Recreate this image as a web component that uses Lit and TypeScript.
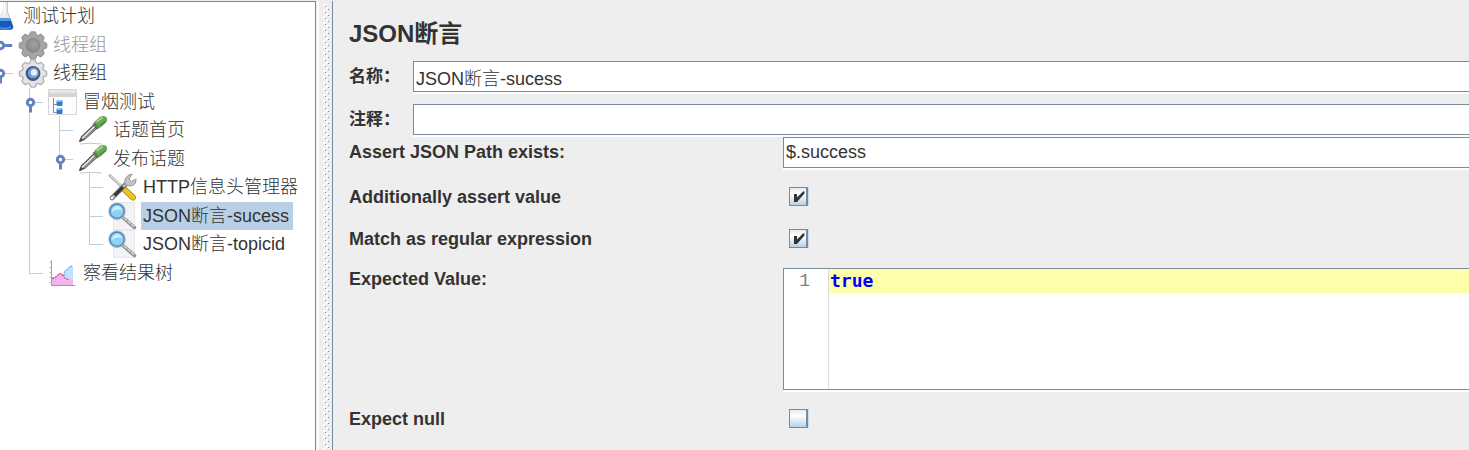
import { LitElement, html, svg, css } from "lit";
import { customElement, property, state } from "lit/decorators.js";

type Guide = "none" | "line" | "tee" | "end" | "open" | "openEnd" | "closed";
interface Node {
  id: string;
  label: string;
  icon: string;
  guides: Guide[];
  disabled?: boolean;
}

const NODES: Node[] = [
  { id: "plan", label: "测试计划", icon: "flask", guides: [] },
  { id: "tg1", label: "线程组", icon: "gearOff", guides: ["closed"], disabled: true },
  { id: "tg2", label: "线程组", icon: "gear", guides: ["open"] },
  { id: "smoke", label: "冒烟测试", icon: "controller", guides: ["none", "open"] },
  { id: "home", label: "话题首页", icon: "pipette", guides: ["none", "line", "tee"] },
  { id: "post", label: "发布话题", icon: "pipette", guides: ["none", "line", "openEnd"] },
  { id: "header", label: "HTTP信息头管理器", icon: "tools", guides: ["none", "line", "none", "tee"] },
  { id: "a1", label: "JSON断言-sucess", icon: "lens", guides: ["none", "line", "none", "tee"] },
  { id: "a2", label: "JSON断言-topicid", icon: "lens", guides: ["none", "line", "none", "end"] },
  { id: "results", label: "察看结果树", icon: "chart", guides: ["none", "end"] },
];

const gear = (body: string, edge: string, ring: string, core: string, hole: string) => svg`
  <g fill=${body} stroke=${edge} stroke-width="1.400">
    <circle cx="15" cy="14.500" r="10.600"/>
    ${[0, 45, 90, 135, 180, 225, 270, 315].map(
      (a) => svg`<path transform="rotate(${a} 15 14.500)" d="M11 5.500 L12.400 1.800 Q12.700 .9 13.600 .9 H16.400 Q17.300 .9 17.600 1.800 L19 5.500"/>`,
    )}
  </g>
  <circle cx="15" cy="14.500" r="10.200" fill=${body}/>
  <circle cx="15" cy="14.500" r="7.400" fill=${ring}/>
  <circle cx="15.300" cy="14" r="5.400" fill=${core}/>
  <circle cx="16" cy="13.500" r="3.200" fill=${hole}/>`;

const ICONS: Record<string, unknown> = {
  flask: svg`
    <path d="M15 -1 V7 L7 24 Q6 28 9 28 H22 Q26 28 25 24 L19.500 10 V-1 Z" fill="#e6e9ed"/>
    <path d="M19.500 0 V10 L25 24" fill="none" stroke="#c3c7cc"/>
    <path d="M10 17 H22.500 L25.300 25 Q25 27.800 22 27.800 H8 Q5 27.500 6 25 Z" fill="#1559b5"/>
    <path d="M11 16 H22 L22.800 19 H10 Z" fill="#5b98e0"/>
    <path d="M12 25.500 Q17 27.500 23 25" stroke="#4a90e2" fill="none" stroke-width="1.500"/>
    <path d="M16.500 0 V10 L15 15" stroke="#fff" fill="none" stroke-width="1.500"/>`,
  gearOff: gear("#a5a5a5", "#999", "#8a8a8a", "#949494", "#9c9c9c"),
  gear: gear("#e4e4e4", "#b4b4b4", "#3a5a94", "#7d9dcb", "#e6eef8"),
  controller: svg`
    <rect x=".5" y="1.500" width="28" height="25" fill="#fdfdfd" stroke="#d5d5d5"/>
    <rect x="1" y="2" width="27" height="7" fill="#d4d4d4"/>
    <rect x="1" y="2" width="27" height="3" fill="#e6e6e6"/>
    <path d="M5.500 10 V24.500 H9 M5.500 16.500 H9" fill="none" stroke="#8c8c8c"/>
    <rect x="8.500" y="12.500" width="6" height="5.500" rx="1" fill="#2c7fd6"/>
    <rect x="8.500" y="20.500" width="6" height="5.500" rx="1" fill="#2c7fd6"/>
    <path d="M9 13.500 H13 M9 21.500 H13" stroke="#8ec1f2"/>`,
  pipette: svg`
    <path d="M2 28 Q12 26.500 24 28" stroke="#c8c8c8" fill="none"/>
    <path d="M.8 25.800 L3 20.500 L15.500 8.500 L19.500 12.500 L7.500 23.300 L2.500 26 Z" fill="#4b4b4b"/>
    <path d="M4 22.500 L16.500 10.500" stroke="#e2e2e2" stroke-width="1.800"/>
    <path d="M5.800 23 L18 12.300" stroke="#999" stroke-width="1.200"/>
    <path d="M14.500 8 L17 6 L22 11 L19.500 13.500 Z" fill="#57804b"/>
    <path d="M16 6 L22 .8 Q25.500 -1 28 .8 Q30 3 28.500 6 L22 12 Z" fill="#69a856"/>
    <path d="M18.500 5.800 L24.500 1.500" stroke="#a5d493" stroke-width="2"/>
    <path d="M22 10 L27.500 5.500" stroke="#4d853d" stroke-width="1.500"/>`,
  tools: svg`
    <path d="M2 2.500 L14 14" stroke="#b5b5b5" stroke-width="3" stroke-linecap="round"/>
    <path d="M2.500 2.500 L13 12.500" stroke="#ededed" stroke-width="1"/>
    <path d="M16.500 16.500 L25 24.500" stroke="#b88d1c" stroke-width="6" stroke-linecap="round"/>
    <path d="M16.500 16.500 L25 24.500" stroke="#f3c51c" stroke-width="4.200" stroke-linecap="round"/>
    <path d="M4 25 L19 10" stroke="#777" stroke-width="4.600" stroke-linecap="round"/>
    <path d="M4 25 L19 10" stroke="#c0c0c0" stroke-width="2.400" stroke-linecap="round"/>
    <path d="M6.500 22.500 L15 14" stroke="#333" stroke-width="3"/>
    <path d="M17 12 Q15.500 5 21 2 L24 1 L21 6 L23.500 8.500 L28 6 Q28.500 12.500 22 13 Z" fill="#c4c4c4" stroke="#969696"/>
    <circle cx="4" cy="25" r="1.200" fill="#fff"/>`,
  lens: svg`
    <path d="M5.500 .5 H26.500 V27.500 H5.500 Z" fill="#f3f3f5" stroke="#e8e8ea"/>
    <path d="M15.500 16 L26.500 25.500" stroke="#8e8e8e" stroke-width="3.600" stroke-linecap="round"/>
    <path d="M16 16 L26.500 25" stroke="#dedede" stroke-width="1.400" stroke-linecap="round" stroke-dasharray="3 2"/>
    <circle cx="9" cy="9.200" r="8" fill="#7fc4ee" stroke="#9fb6cc" stroke-width="1.400"/>
    <circle cx="9" cy="9.200" r="7" fill="#8fd0f3" stroke="#4a86bd" stroke-width="1.200"/>
    <path d="M4 8.500 Q5.500 4 9.500 4 Q13.500 4.500 14 8.500 Q9 6 4 10 Z" fill="#cdeefc"/>`,
  chart: svg`
    <path d="M4 26 V18.500 Q8 18.500 10 15.500 Q12.500 12.500 15 16 Q18 20 21 17 L25 16 V26 Z" fill="#f3b4ee"/>
    <path d="M25 7 V20 Q19 22 16.500 17.500 Q15 12 19.500 10.500 Q21 7 25 7 Z" fill="#c3e0fb"/>
    <path d="M16.500 17 Q15 12 19.500 10.500 Q21 7 25 7" fill="none" stroke="#72aae2" stroke-width="1.300" stroke-dasharray="2 1"/>
    <path d="M4 19.500 Q8 19 10 15.800 Q12.500 13 15 16.500 Q18 21 21 20" fill="none" stroke="#cc5aa0" stroke-width="1.500" stroke-dasharray="2 1"/>
    <path d="M3.500 1 V26.500 H27" fill="none" stroke="#9b9b9b"/>
    <path d="M1.500 3.500 H4 M1.500 8.500 H4 M1.500 13.500 H4 M1.500 18.500 H4 M1.500 23.500 H4" stroke="#b4b4b4"/>`,
};

const guide = (g: Guide) => {
  const parts: unknown[] = [];
  if (g === "line" || g === "tee" || g === "open") parts.push(svg`<path class="rule" d="M11.500 0 V29"/>`);
  if (g === "end" || g === "openEnd") parts.push(svg`<path class="rule" d="M11.500 0 V14.500"/>`);
  if (g !== "line" && g !== "none") parts.push(svg`<path class="rule" d="M11.500 14.500 H25"/>`);
  if (g === "open" || g === "openEnd")
    parts.push(svg`<path d="M12.500 17 V24.500" class="stem"/><circle class="knob" cx="12.500" cy="14.500" r="3.200"/>`);
  if (g === "closed")
    parts.push(svg`<path d="M15 14.500 H24" class="stem"/><circle class="knob" cx="12.500" cy="14.500" r="3.200"/>`);
  return html`<svg class="guide" viewBox="0 0 30 28" aria-hidden="true">${parts}</svg>`;
};

@customElement("plan-tree")
class PlanTree extends LitElement {
  @property() selected = "a1";

  static styles = css`
    :host {
      display: block;
      overflow: hidden;
      background: #fff;
      border-top: 1px solid #7a8a99;
      border-right: 1px solid #7a8a99;
      box-shadow: 1px 0 #eee, 3px 0 #fff;
    }
    .tree {
      display: grid;
      grid-auto-rows: 1fr;
      height: 285px;
      margin: 0 0 0 -12px;
      padding: 0;
      list-style: none;
    }
    .row {
      display: flex;
      align-items: center;
      min-height: 0;
      white-space: nowrap;
    }
    .guide,
    .icon {
      width: 30px;
      height: 28px;
      flex: none;
      overflow: visible;
    }
    .rule {
      fill: none;
      stroke: #b8cfe5;
      shape-rendering: crispEdges;
    }
    .stem {
      stroke: #6382bf;
      stroke-width: 3;
    }
    .knob {
      fill: #fff;
      stroke: #6382bf;
      stroke-width: 3;
    }
    .label {
      margin: 0 0 0 3px;
      padding: 0 4px 0 2px;
      border: 0;
      background: none;
      color: #333;
      font: 300 18px/28px "Liberation Sans", "Noto Sans CJK SC", sans-serif;
      text-align: left;
    }
    .off {
      color: #999;
    }
    .on {
      background: #b8cfe5;
    }
  `;

  render() {
    return html`<ul class="tree">
      ${NODES.map(
        (n) => html`<li class="row">
          ${n.guides.map(guide)}
          <svg class="icon" viewBox="0 0 30 28" aria-hidden="true">${ICONS[n.icon]}</svg>
          <button
            class="label ${n.disabled ? "off" : ""} ${n.id === this.selected ? "on" : ""}"
            @click=${() => (this.selected = n.id)}
          >${n.label}</button>
        </li>`,
      )}
    </ul>`;
  }
}

@customElement("assertion-form")
class AssertionForm extends LitElement {
  @state() private lines = 1;

  static styles = css`
    :host {
      display: block;
      min-width: 0;
      padding: 16px 0 0 16px;
      border-left: 1px solid #7a8a99;
      overflow: hidden;
      color: #333;
      font: bold 18px/22px "Liberation Sans", "Noto Sans CJK SC", sans-serif;
    }
    .title {
      margin: 0 0 10px;
      font-size: 24px;
      line-height: 34px;
    }
    .row {
      display: grid;
      grid-template-columns: 64px 1fr;
      align-items: center;
      margin-bottom: 12px;
    }
    .options {
      display: grid;
      grid-template-columns: 434px 1fr;
      row-gap: 8px;
      margin-top: -10px;
    }
    .pair {
      display: grid;
      grid-template-columns: 434px 1fr;
      grid-column: 1 / -1;
      line-height: 42px;
    }
    .group {
      grid-column: 1 / -1;
    }
    .name {
      line-height: 31px;
    }
    .cjk {
      font-size: 17px;
    }
    .field {
      box-sizing: border-box;
      width: 100%;
      height: 31px;
      padding: 0 2px;
      border: 1px solid #7a8a99;
      border-right: 0;
      border-radius: 0;
      outline: 0;
      background: #fff;
      box-shadow: 0 2px #fff;
      color: #333;
      font: 300 18px/26px "Liberation Sans", "Noto Sans CJK SC", sans-serif;
    }
    .check {
      appearance: none;
      box-sizing: border-box;
      width: 19px;
      height: 19px;
      margin: 11px 0 0 6px;
      border: 1px solid #7a8a99;
      border-right-width: 2px;
      background: linear-gradient(#e2ecf6, #fff 35%, #b8cfe5);
      box-shadow: 1px 0 #c9dcef;
    }
    .check:checked {
      background:
        url("data:image/svg+xml,%3Csvg xmlns='http://www.w3.org/2000/svg' viewBox='0 0 16 17'%3E%3Cpath d='M4 6h3v3.500l6-6h1.500v2L7 14H4z' fill='%23333'/%3E%3C/svg%3E") center / 16px 17px no-repeat,
        linear-gradient(#e2ecf6, #fff 35%, #b8cfe5);
    }
    .editor {
      display: flex;
      box-sizing: border-box;
      height: 122px;
      border: 1px solid #7a8a99;
      border-right: 0;
      background: #fff;
      box-shadow: 0 2px #fff;
      font: 18px/24px "Liberation Mono", monospace;
    }
    .gutter {
      box-sizing: border-box;
      width: 45px;
      padding-right: 18px;
      border-right: 1px solid #ddd;
      color: #808080;
      text-align: right;
    }
    .code {
      flex: 1;
      min-width: 0;
      padding: 0 0 0 1px;
      border: 0;
      outline: 0;
      resize: none;
      background: linear-gradient(#ffffaa, #ffffaa) 0 0 / 100% 24px no-repeat #fff;
      color: #00f;
      font: bold 18px/24px "DejaVu Sans Mono", monospace;
    }
  `;

  private onInput(e: Event) {
    this.lines = (e.target as HTMLTextAreaElement).value.split("\n").length;
  }

  render() {
    return html`
      <h1 class="title">JSON断言</h1>
      <div class="row">
        <label class="cjk" for="name">名称：</label>
        <input class="field" id="name" value="JSON断言-sucess" />
      </div>
      <div class="row">
        <label class="cjk" for="comment">注释：</label>
        <input class="field" id="comment" />
      </div>
      <div class="options">
        <label class="name" for="path">Assert JSON Path exists:</label>
        <input class="field" id="path" value="$.success" />
        <div class="group">
          <div class="pair">
            <label for="assert">Additionally assert value</label>
            <input class="check" id="assert" type="checkbox" checked />
          </div>
          <div class="pair">
            <label for="regex">Match as regular expression</label>
            <input class="check" id="regex" type="checkbox" checked />
          </div>
        </div>
        <label for="expected">Expected Value:</label>
        <div class="editor">
          <div class="gutter">${Array.from({ length: this.lines }, (_, i) => html`<div>${i + 1}</div>`)}</div>
          <textarea class="code" id="expected" spellcheck="false" @input=${this.onInput} .value=${"true"}></textarea>
        </div>
        <div class="pair">
          <label for="null">Expect null</label>
          <input class="check" id="null" type="checkbox" />
        </div>
      </div>
    `;
  }
}

@customElement("app-root")
class AppRoot extends LitElement {
  static styles = css`
    :host {
      display: grid;
      grid-template-columns: 316px 16px minmax(0, 1fr);
      min-height: 100vh;
      padding-top: 1px;
      box-sizing: border-box;
      background: #eee;
      overflow: hidden;
    }
    .divider {
      margin: 3px 1px 0 7px;
      background: url("data:image/svg+xml,%3Csvg xmlns='http://www.w3.org/2000/svg' width='8' height='6' shape-rendering='crispEdges'%3E%3Cpath d='M0 0h2v2H0zM3 3h2v2H3z' fill='%23fff'/%3E%3Cpath d='M2 2h1v1H2zM5 5h1v1H5z' fill='%237a8a99'/%3E%3C/svg%3E") repeat-y;
    }
  `;

  render() {
    return html`
      <plan-tree></plan-tree>
      <div class="divider" role="separator"></div>
      <assertion-form></assertion-form>
    `;
  }
}
